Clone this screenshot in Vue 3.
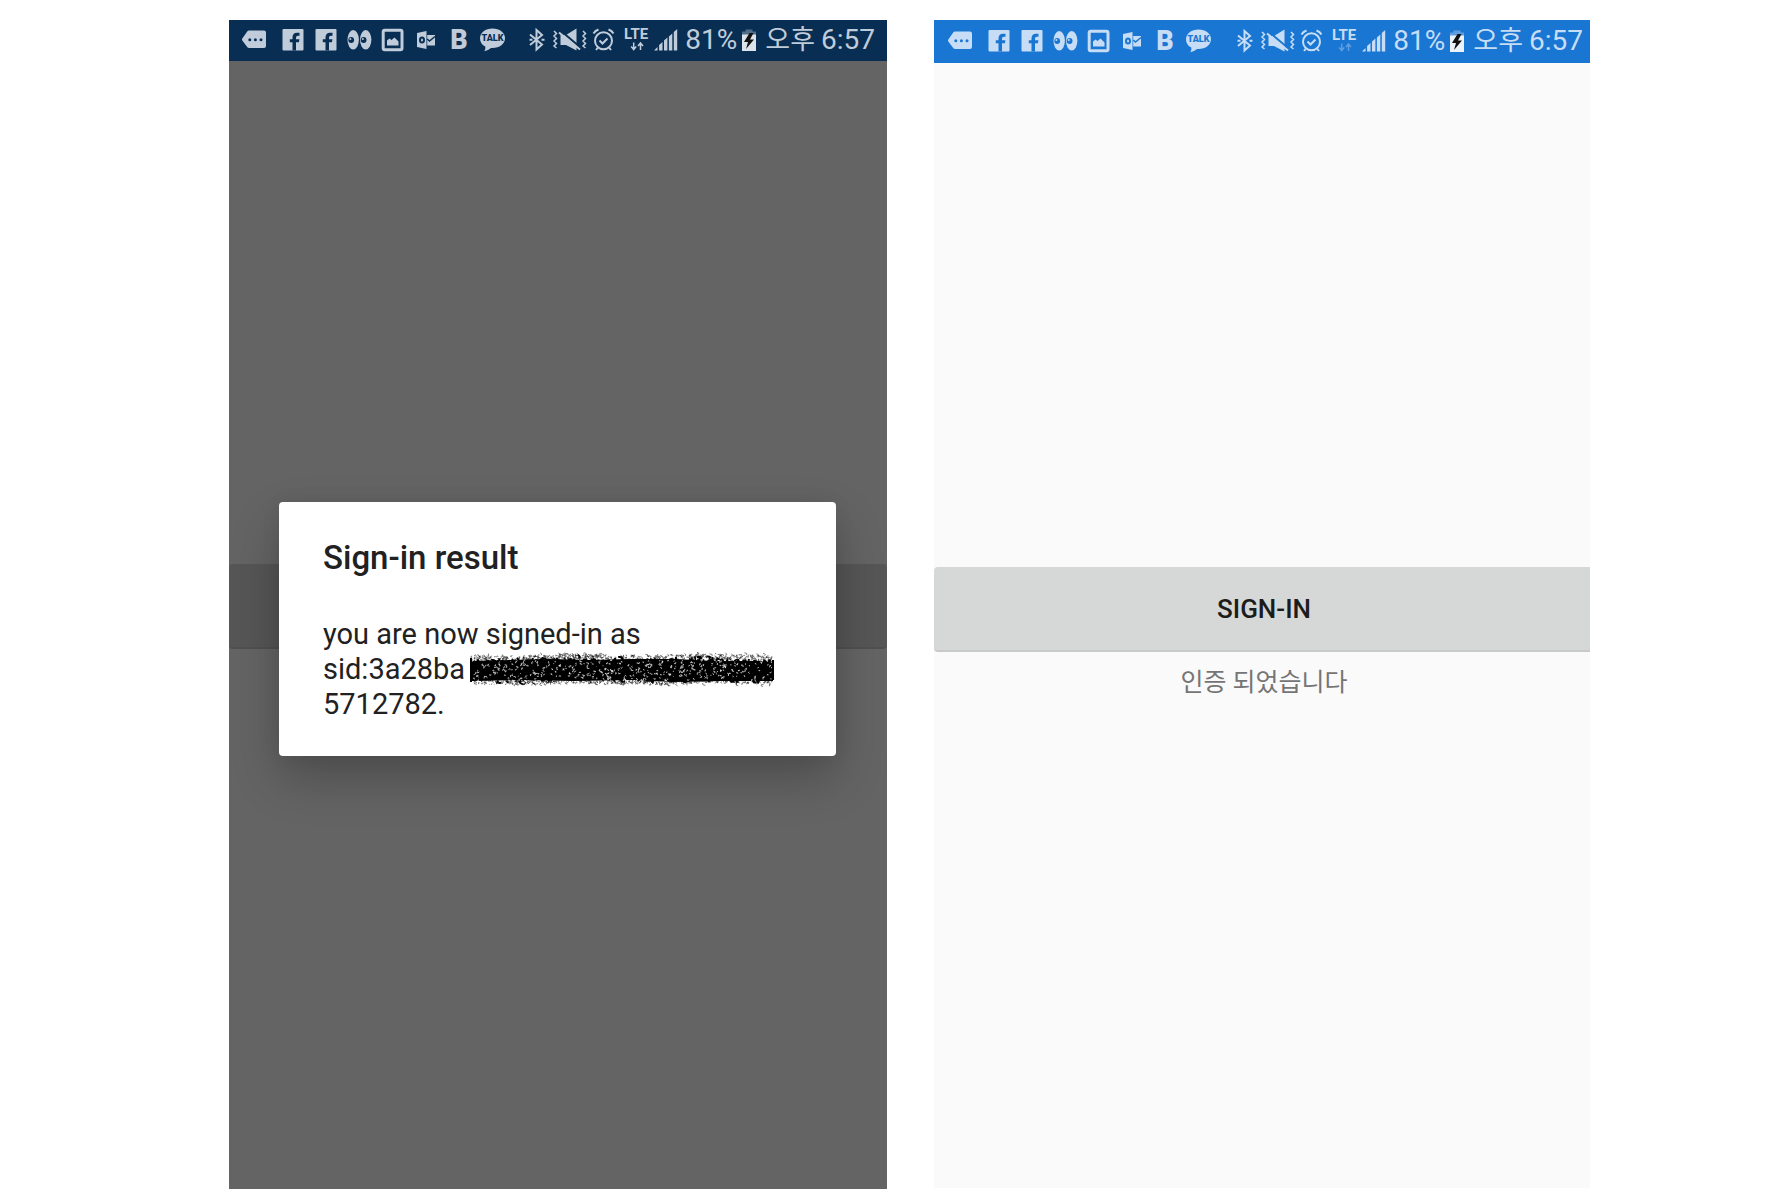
<script setup>
const phones = [
  { id: 'result', dimmed: true },
  { id: 'home', dimmed: false },
]

// Deterministic noise, so the redaction marker looks the same on every render
function createRandom(seed) {
  let state = seed
  return () => {
    state = (state * 1664525 + 1013904223) % 4294967296
    return state / 4294967296
  }
}

const MARK_WIDTH = 304

function curls(count, seed, minY, maxY, size) {
  const rand = createRandom(seed)
  const at = (n) => n.toFixed(1)
  let d = ''
  for (let i = 0; i < count; i++) {
    const x = 2 + rand() * (MARK_WIDTH - 4)
    const y = minY + rand() * (maxY - minY) + Math.sin(x / 22)
    const a = (rand() - 0.5) * size
    const b = (rand() - 0.5) * size
    d += `M${at(x)} ${at(y)}q${at(a)} ${at(b)} ${at(b)} ${at(-a)}`
  }
  return d
}

const edgeTop = curls(520, 7, 3, 9, 5)
const edgeBottom = curls(520, 19, 26, 32, 5)
const inkCurls = curls(500, 31, 7, 28, 8)
const gaps = curls(400, 53, 8, 28, 4)
</script>

<template>
  <main class="page">
    <section
      v-for="phone in phones"
      :key="phone.id"
      class="phone"
      :class="[phone.id, { dimmed: phone.dimmed }]"
    >
      <header class="status">
        <div class="notifications" aria-hidden="true">
          <svg class="tag" width="26" height="24" viewBox="0 0 26 24">
            <path class="ink" d="M8 2.500h15q2 0 2 2V18q0 2-2 2H8q-1 0-1.600-.8L1.300 12.500q-.6-1 0-2L6.400 3.300Q7 2.500 8 2.500z" />
            <circle class="cut" cx="8.800" cy="11.800" r="1.500" />
            <circle class="cut" cx="14.400" cy="11.800" r="1.500" />
            <circle class="cut" cx="20" cy="11.800" r="1.500" />
          </svg>
          <svg v-for="n in 2" :key="n" width="26" height="24" viewBox="0 0 26 24">
            <rect class="ink" x="2.500" y="1" width="21" height="21.500" rx="1" />
            <path class="cut" d="M12.500 22.500V14.300H9.800V11.300h2.700V9.500Q12.500 4.800 17 4.800h2.500v3H17.800q-1.800 0-1.800 1.900v1.600h3.400l-.5 3H16v8.200z" />
          </svg>
          <svg width="26" height="24" viewBox="0 0 26 24">
            <ellipse class="ink" cx="7.200" cy="11.800" rx="5.700" ry="9.700" />
            <ellipse class="ink" cx="19.700" cy="11.800" rx="5.700" ry="9.700" />
            <circle class="cut" cx="5.200" cy="12" r="2.900" />
            <circle class="cut" cx="17.600" cy="12" r="2.900" />
            <circle class="ink" cx="4.400" cy="11" r="1" />
            <circle class="ink" cx="16.800" cy="11" r="1" />
          </svg>
          <svg width="26" height="24" viewBox="0 0 26 24">
            <rect class="line frame" x="4.200" y="2.200" width="18.800" height="19.600" rx="1.500" />
            <path class="ink" d="M8 17.500v-5l2.500-2 2 1.500 3-2.500 4 4v4z" />
          </svg>
          <svg width="26" height="24" viewBox="0 0 26 24">
            <path class="ink" d="M5 5l9.500-2v18L5 19z" />
            <ellipse class="line cut-line" cx="10" cy="12" rx="2" ry="2.500" />
            <path class="ink" d="M15.200 7H23v10.500h-7.800z" />
            <path class="thin cut-line" d="M15.200 11l2.300 2L23 8.500" />
          </svg>
          <svg width="26" height="24" viewBox="0 0 26 24">
            <text class="ink letter-b" x="14" y="21" text-anchor="middle">B</text>
          </svg>
          <svg width="26" height="24" viewBox="0 0 26 24">
            <path class="ink" d="M14.500.500C21.500.500 27 4.700 27 10.200S21.500 20 14.500 20q-1 0-1.500-.1-3 2.600-6.700 3.400 1.500-2.300 1-4.700C4 17 2 13.900 2 10.200 2 4.700 7.500.500 14.500.500z" />
            <text class="cut talk" x="14.500" y="13" text-anchor="middle">TALK</text>
          </svg>
        </div>

        <div class="system">
          <svg width="20" height="24" viewBox="0 0 20 24" aria-hidden="true">
            <path class="line" d="M3 6.500l12 10-5.500 5V2L15 7 3 17M2.500 11.800h3M14.500 11.800h3" />
          </svg>
          <svg width="36" height="24" viewBox="0 0 36 24" aria-hidden="true">
            <path class="thin" d="M3 3l2.500 2.500L3 8l2.500 2.500L3 13l2.500 2.500L3 18l2.500 2M32 3l2.500 2.500L32 8l2.500 2.500L32 13l2.500 2.500L32 18l2.500 2" />
            <path class="ink" d="M9.500 7H15l10.500-6.500v22L15 17H9.500z" />
            <path class="gap" d="M9.500 2.500l20 17" />
            <path class="line" d="M8 4.500l21 17" />
          </svg>
          <svg width="24" height="24" viewBox="0 0 24 24" aria-hidden="true">
            <circle class="line" cx="12.500" cy="12.800" r="8.500" />
            <path class="line" d="M2.500 5.500Q4 2.800 7.500 1.500M22.500 5.500Q21 2.800 17.500 1.500M7 19.500L5 22M18 19.500l2 2.500M8.500 12.500l3 3 5-5" />
          </svg>
          <svg width="30" height="24" viewBox="0 0 30 24">
            <text class="ink lte" x="5" y="11">LTE</text>
            <path class="thin arrows" d="M14.700 14.500v7M12.200 18.500l2.500 3 2.500-3M21.500 22v-7M19 18l2.500-3 2.500 3" />
          </svg>
          <svg width="24" height="24" viewBox="0 0 24 24" aria-hidden="true">
            <path class="ink" d="M1 22.500l3.500-3.500v3.500zM6.100 22.500V17l3.400-3v8.500zM11 22.500V12.500l3.400-3v13zM15.900 22.500V8.500l3.400-3v17zM20.800 22.500V4L24.200 1v21.500z" />
          </svg>
          <span class="percent">81%</span>
          <svg width="16" height="24" viewBox="0 0 16 24" aria-hidden="true">
            <path class="ink faint" d="M1 3.500h3.500v-2h7v2H15v4H1z" />
            <path class="cell" d="M1 6.500h14v16.500H1z" />
            <path class="bolt" d="M8.500 5L3 14h4l-2 7 8-9.500H9L12.500 5z" />
          </svg>
          <span class="meridiem">오후</span>
          <time datetime="18:57">6:57</time>
        </div>
      </header>

      <div class="screen">
        <button class="sign-in" type="button" :aria-label="phone.dimmed ? 'Sign in' : null">
          <template v-if="!phone.dimmed">SIGN-IN</template>
        </button>
        <p v-if="!phone.dimmed" class="message">인증 되었습니다</p>

        <div v-if="phone.dimmed" class="overlay">
          <article class="dialog" role="dialog" aria-labelledby="dialog-title">
            <h1 id="dialog-title">Sign-in result</h1>
            <p>
              you are now signed-in as
              <span class="sid">sid:3a28ba<svg class="marker" :width="MARK_WIDTH" height="35" :viewBox="`0 0 ${MARK_WIDTH} 35`" aria-hidden="true">
                <path class="marker-body" d="M3 9L40 8l40-1 40 1 40-1 45 0 40 2 58 0v20l-50 0-50 1-40-2-60 1-50-1-50 1-28 1z" />
                <path class="marker-edge" :d="edgeTop" />
                <path class="marker-edge" :d="edgeBottom" />
                <path class="marker-ink" :d="inkCurls" />
                <path class="marker-gap" :d="gaps" />
                <path class="marker-ink" d="M1 6v24M303 8v20" />
              </svg></span>
              5712782.
            </p>
          </article>
        </div>
      </div>
    </section>
  </main>
</template>

<style>
body {
  margin: 0;
  background: #fff;
}
</style>

<style scoped>
.page {
  display: grid;
  grid-template-columns: 229fr 658fr 47fr 656fr 198fr;
  align-items: start;
  padding: 20px 0 7px;
  font-family: Roboto, "Noto Sans CJK KR", sans-serif;
}

.phone {
  --bar: #1976d2;
  --ink: #c6ddf5;
  --cell: #eaf3fc;
  --surface: #fafafa;
  --button: #d6d8d7;
  --button-edge: #c8cac9;
  display: flex;
  flex-direction: column;
  grid-column: 4;
  aspect-ratio: 656 / 1168;
  background: var(--surface);
  overflow: hidden;
}

.phone.dimmed {
  --bar: #092e54;
  --ink: #c0ccd9;
  --cell: #dde3ea;
  --surface: #646464;
  --button: #565656;
  --button-edge: #505050;
  grid-column: 2;
  grid-row: 1;
  aspect-ratio: 658 / 1169;
}

.status {
  display: flex;
  justify-content: space-between;
  align-items: center;
  height: 43px;
  padding: 0 7px 2px 13px;
  box-sizing: border-box;
  background: var(--bar);
  color: var(--ink);
}

.dimmed .status {
  height: 41px;
  padding: 0 12px 2px;
}

.status svg {
  display: block;
  flex: none;
  overflow: visible;
}

.notifications {
  display: flex;
  gap: 7px;
}

.tag {
  margin-right: 6px;
}

.system {
  display: flex;
  align-items: center;
  gap: 4px;
  font-size: 28px;
  line-height: 32px;
  white-space: nowrap;
}

.percent {
  margin-left: 4px;
}

.meridiem {
  margin: 0 2px 0 4px;
  font-size: 27px;
}

.ink {
  fill: var(--ink);
}

.faint {
  opacity: 0.4;
}

.cut {
  fill: var(--bar);
}

.line,
.thin,
.gap {
  fill: none;
  stroke: var(--ink);
  stroke-width: 2;
}

.line.frame {
  stroke-width: 3;
}

.thin {
  stroke-width: 1.5;
}

.gap,
.cut-line {
  stroke: var(--bar);
}

.cell {
  fill: var(--cell);
}

.bolt {
  fill: #111;
}

.home .arrows {
  opacity: 0.4;
}

.letter-b {
  font-size: 27px;
  font-weight: 900;
}

.talk {
  font-size: 9px;
  font-weight: 900;
}

.lte {
  font-size: 15px;
  font-weight: 700;
}

.screen {
  position: relative;
  display: flex;
  flex: 1;
  flex-direction: column;
  justify-content: center;
}

.dimmed .screen {
  padding-bottom: 38px;
}

.sign-in {
  height: 85px;
  margin: 16px 0 14px;
  padding: 0 0 0 4px;
  border: 0;
  border-bottom: 2px solid var(--button-edge);
  border-radius: 4px 0 0 4px;
  background: var(--button);
  color: #1c1c1c;
  font: 500 26px/30px Roboto, sans-serif;
}

.dimmed .sign-in {
  margin: 0;
  border-radius: 4px;
}

.message {
  margin: 0;
  padding-left: 4px;
  color: #757575;
  font-size: 25px;
  line-height: 34px;
  text-align: center;
}

.overlay {
  position: absolute;
  inset: 0;
  display: flex;
  flex-direction: column;
  justify-content: center;
  padding: 7px 51px 0 50px;
}

.dialog {
  padding: 36px 44px 34px;
  border-radius: 4px;
  background: #fff;
  box-shadow: 0 22px 48px rgba(0, 0, 0, 0.24), 0 0 20px rgba(0, 0, 0, 0.06);
  color: #212121;
}

.dialog h1 {
  margin: 0 0 39px;
  font-size: 33px;
  font-weight: 500;
  line-height: 40px;
}

.dialog p {
  margin: 0;
  font-size: 29px;
  line-height: 35px;
}

.sid {
  display: flex;
  height: 35px;
  white-space: nowrap;
}

.marker {
  flex: none;
  margin-left: 5px;
}

.marker-body {
  fill: #000;
}

.marker-edge,
.marker-ink,
.marker-gap {
  fill: none;
  stroke: #000;
  stroke-width: 1;
}

.marker-edge {
  opacity: 0.5;
}

.marker-ink {
  stroke-width: 2;
}

.marker-gap {
  stroke: #fff;
  opacity: 0.7;
}
</style>
